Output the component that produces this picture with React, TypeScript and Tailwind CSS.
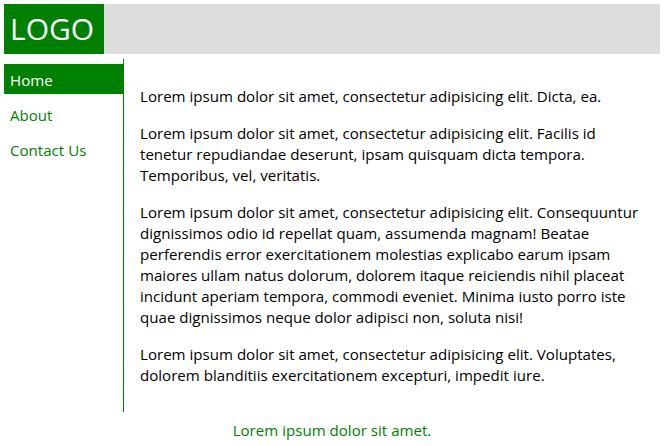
const navItems = ["Home", "About", "Contact Us"];

export default function App() {
  return (
    <div className="p-[4px] text-[15.1px] leading-[21px] text-black" style={{ fontFamily: "'Open Sans', sans-serif" }}>
      <header className="flex h-[50px] bg-[#dddddd]">
        <div className="w-[100px] bg-[#008000] text-white text-[30px] leading-none flex items-center pl-[6px]">
          LOGO
        </div>
      </header>

      <div className="flex mt-[5px]">
        <nav className="w-[120px] shrink-0 border-r border-[#008000] pt-[5px] flex flex-col gap-[5px]">
          {navItems.map((item, i) => (
            <a
              key={item}
              href="#"
              className={
                i === 0
                  ? "h-[30px] flex items-center pl-[6px] pt-[2px] bg-[#008000] text-white"
                  : "h-[30px] flex items-center pl-[6px] pt-[2px] text-[#008000]"
              }
            >
              {item}
            </a>
          ))}
        </nav>

        <main className="flex-1 pl-[16px] pr-[16px] pt-[11px] pb-[10px]">
          <p className="my-4">Lorem ipsum dolor sit amet, consectetur adipisicing elit. Dicta, ea.</p>
          <p className="my-4">
            Lorem ipsum dolor sit amet, consectetur adipisicing elit. Facilis id tenetur repudiandae deserunt, ipsam
            quisquam dicta tempora. Temporibus, vel, veritatis.
          </p>
          <p className="my-4">
            Lorem ipsum dolor sit amet, consectetur adipisicing elit. Consequuntur dignissimos odio id repellat quam,
            assumenda magnam! Beatae perferendis error exercitationem molestias explicabo earum ipsam maiores ullam natus
            dolorum, dolorem itaque reiciendis nihil placeat incidunt aperiam tempora, commodi eveniet. Minima iusto porro
            iste quae dignissimos neque dolor adipisci non, soluta nisi!
          </p>
          <p className="my-4">
            Lorem ipsum dolor sit amet, consectetur adipisicing elit. Voluptates, dolorem blanditiis exercitationem
            excepturi, impedit iure.
          </p>
        </main>
      </div>

      <footer className="mt-[8px] text-center text-[#008000]">Lorem ipsum dolor sit amet.</footer>
    </div>
  );
}
